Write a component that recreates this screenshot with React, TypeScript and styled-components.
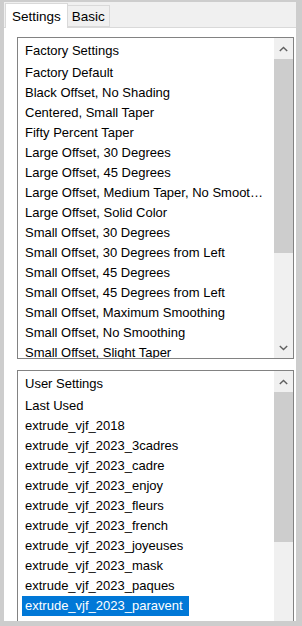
import React from 'react';
import styled, { createGlobalStyle } from 'styled-components';

const GlobalStyle = createGlobalStyle`
  body {
    margin: 0;
    background: #cdcdcd;
    font-family: "Liberation Sans", Arial, sans-serif;
  }
`;

const Frame = styled.div`
  width: 302px;
  height: 626px;
  box-sizing: border-box;
  padding: 2px 6px 5px 4px;
`;

const Panel = styled.div`
  height: 100%;
  display: flex;
  flex-direction: column;
  background: #f0f0f0;
  overflow: hidden;
`;

const TabStrip = styled.div`
  display: flex;
  align-items: flex-end;
  height: 25px;
  padding-left: 1px;
`;

const Tab = styled.div<{ $active?: boolean }>`
  box-sizing: border-box;
  height: ${(p) => (p.$active ? '25px' : '22px')};
  padding: 0 ${(p) => (p.$active ? '6px' : '4px')};
  margin-bottom: ${(p) => (p.$active ? '-1px' : '0')};
  display: flex;
  align-items: center;
  font-size: 13.5px;
  color: #000;
  background: ${(p) => (p.$active ? '#fff' : '#f0f0f0')};
  border: 1px solid #d9d9d9;
  border-bottom: ${(p) => (p.$active ? 'none' : '1px solid #d9d9d9')};
  position: relative;
  z-index: ${(p) => (p.$active ? 1 : 0)};
  & + & {
    border-left: none;
  }
`;

const Page = styled.div`
  flex: 1;
  background: #fff;
  border-top: 1px solid #d9d9d9;
  padding: 9px 0 0 13px;
  display: flex;
  flex-direction: column;
  gap: 11px;
  overflow: hidden;
`;

const ListBox = styled.div<{ $height: number }>`
  flex: none;
  height: ${(p) => p.$height}px;
  width: 277px;
  box-sizing: border-box;
  border: 1px solid #828282;
  display: flex;
  background: #fff;
`;

const Items = styled.div`
  flex: 1;
  min-width: 0;
  overflow: hidden;
  padding: 1px 4px 0;
`;

const Header = styled.div`
  height: 24px;
  line-height: 24px;
  padding: 0 3px;
  font-size: 13px;
  color: #000;
  white-space: nowrap;
`;

const Item = styled.div<{ $selected?: boolean }>`
  height: 20px;
  line-height: 20px;
  padding: 0 ${(p) => (p.$selected ? '6px' : '3px')} 0 3px;
  font-size: 13px;
  white-space: nowrap;
  overflow: hidden;
  text-overflow: ellipsis;
  color: ${(p) => (p.$selected ? '#fff' : '#000')};
  background: ${(p) => (p.$selected ? '#0078d7' : 'transparent')};
  width: ${(p) => (p.$selected ? 'fit-content' : 'auto')};
`;

const ScrollBar = styled.div`
  flex: none;
  width: 19px;
  background: #f0f0f0;
  display: flex;
  flex-direction: column;
`;

const Arrow = styled.div`
  height: 21px;
  flex: none;
  display: flex;
  align-items: center;
  justify-content: center;
  color: #606060;
`;

const Track = styled.div`
  flex: 1;
  display: flex;
  flex-direction: column;
`;

const Thumb = styled.div<{ $size: number }>`
  height: ${(p) => p.$size}px;
  background: #cdcdcd;
`;

const Chevron = ({ down }: { down?: boolean }) => (
  <svg width="9" height="6" viewBox="0 0 9 6">
    <path
      d={down ? 'M0.8 1 L4.5 4.6 L8.2 1' : 'M0.8 5 L4.5 1.4 L8.2 5'}
      fill="none"
      stroke="currentColor"
      strokeWidth="1.4"
    />
  </svg>
);

const factory = [
  'Factory Default',
  'Black Offset, No Shading',
  'Centered, Small Taper',
  'Fifty Percent Taper',
  'Large Offset, 30 Degrees',
  'Large Offset, 45 Degrees',
  'Large Offset, Medium Taper, No Smoothing',
  'Large Offset, Solid Color',
  'Small Offset, 30 Degrees',
  'Small Offset, 30 Degrees from Left',
  'Small Offset, 45 Degrees',
  'Small Offset, 45 Degrees from Left',
  'Small Offset, Maximum Smoothing',
  'Small Offset, No Smoothing',
  'Small Offset, Slight Taper',
];

const user = [
  'Last Used',
  'extrude_vjf_2018',
  'extrude_vjf_2023_3cadres',
  'extrude_vjf_2023_cadre',
  'extrude_vjf_2023_enjoy',
  'extrude_vjf_2023_fleurs',
  'extrude_vjf_2023_french',
  'extrude_vjf_2023_joyeuses',
  'extrude_vjf_2023_mask',
  'extrude_vjf_2023_paques',
  'extrude_vjf_2023_paravent',
  'extrude_vjf_2023_',
];

export default function App() {
  return (
    <Frame>
      <GlobalStyle />
      <Panel>
        <TabStrip>
          <Tab $active>Settings</Tab>
          <Tab>Basic</Tab>
        </TabStrip>
        <Page>
          <ListBox $height={322}>
            <Items>
              <Header>Factory Settings</Header>
              {factory.map((f) => (
                <Item key={f}>{f}</Item>
              ))}
            </Items>
            <ScrollBar>
              <Arrow>
                <Chevron />
              </Arrow>
              <Track>
                <Thumb $size={194} />
              </Track>
              <Arrow>
                <Chevron down />
              </Arrow>
            </ScrollBar>
          </ListBox>
          <ListBox $height={300}>
            <Items>
              <Header>User Settings</Header>
              {user.map((u, i) => (
                <Item key={u} $selected={i === 10}>
                  {u}
                </Item>
              ))}
            </Items>
            <ScrollBar>
              <Arrow>
                <Chevron />
              </Arrow>
              <Track>
                <Thumb $size={150} />
              </Track>
            </ScrollBar>
          </ListBox>
        </Page>
      </Panel>
    </Frame>
  );
}
